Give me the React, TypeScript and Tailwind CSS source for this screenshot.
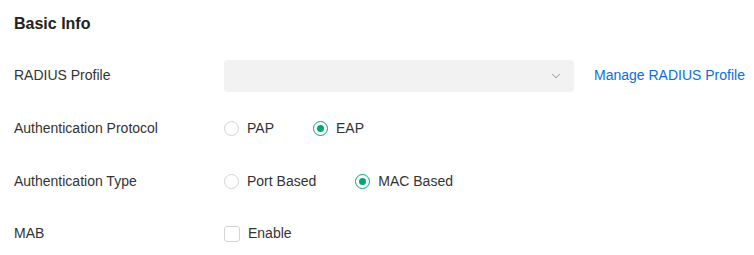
import { ChevronDown } from "lucide-react";

function Radio({ label, checked }: { label: string; checked?: boolean }) {
  return (
    <label className="flex items-center gap-2">
      <span
        className={
          checked
            ? "flex h-[15px] w-[15px] items-center justify-center rounded-full border border-[#00a870]"
            : "h-[15px] w-[15px] rounded-full border border-[#d4d4d4]"
        }
      >
        {checked && <span className="h-[7px] w-[7px] rounded-full bg-[#00a870]" />}
      </span>
      <span>{label}</span>
    </label>
  );
}

function Row({ label, children }: { label: string; children: React.ReactNode }) {
  return (
    <div className="flex h-[53px] items-center">
      <div className="w-[210px] shrink-0">{label}</div>
      {children}
    </div>
  );
}

export default function App() {
  return (
    <div
      className="h-[255px] w-[754px] bg-white pl-[14px] text-[14px] text-[#333]"
      style={{ fontFamily: '"Liberation Sans", Arial, sans-serif' }}
    >
      <h2 className="pt-[14px] text-[16px] font-bold leading-[19px] text-[#222]">Basic Info</h2>
      <div className="mt-[16px]">
        <Row label="RADIUS Profile">
          <div className="flex h-[32px] w-[350px] items-center justify-end rounded-[4px] bg-[#f2f2f2] pr-[11px]">
            <ChevronDown className="h-[14px] w-[14px] text-[#a0a0a0]" strokeWidth={1.75} />
          </div>
          <a className="ml-[20px] cursor-pointer text-[#0a6fd8]">Manage RADIUS Profile</a>
        </Row>
        <Row label="Authentication Protocol">
          <div className="flex gap-[39px]">
            <Radio label="PAP" />
            <Radio label="EAP" checked />
          </div>
        </Row>
        <Row label="Authentication Type">
          <div className="flex gap-[39px]">
            <Radio label="Port Based" />
            <Radio label="MAC Based" checked />
          </div>
        </Row>
        <div className="flex h-[51px] items-center">
          <div className="w-[210px] shrink-0">MAB</div>
          <label className="flex items-center gap-[8px]">
            <span className="h-[16px] w-[16px] rounded-[3px] border border-[#d4d4d4]" />
            <span>Enable</span>
          </label>
        </div>
      </div>
    </div>
  );
}
